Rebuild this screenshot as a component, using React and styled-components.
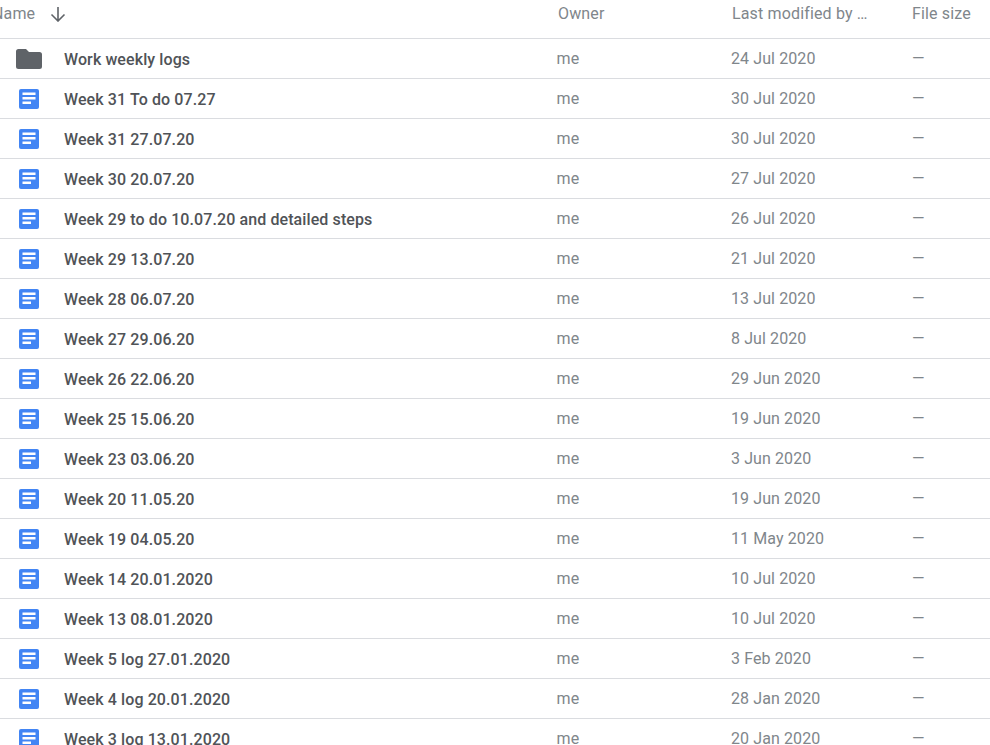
import React from 'react'
import styled, { createGlobalStyle } from 'styled-components'

const GlobalStyle = createGlobalStyle`
    html, body {
        margin: 0;
        padding: 0;
        height: 100%;
        background: #ffffff;
        overflow: hidden;
    }
`

const columns = '556.5px 174.5px 181px 78px'

const Page = styled.main`
    width: 990px;
    height: 745px;
    overflow: hidden;
    font-family: Roboto, 'Liberation Sans', sans-serif;
`

const Header = styled.div`
    display: grid;
    grid-template-columns: ${columns};
    height: 39px;
    box-sizing: border-box;
    align-items: center;
    padding-bottom: 11px;
    border-bottom: 1px solid #dadce0;
`

const HeaderCell = styled.div`
    font-size: 16px;
    font-weight: 400;
    letter-spacing: 0.15px;
    color: #80868b;
    white-space: nowrap;
    padding-left: ${(props) => props.$indent || 0}px;
`

const NameHeader = styled.div`
    display: flex;
    align-items: center;
    gap: 15px;
    margin-left: -8px;
`

const Row = styled.div`
    display: grid;
    grid-template-columns: ${columns};
    height: 40px;
    box-sizing: border-box;
    align-items: center;
    padding-top: 1px;
    border-bottom: 1px solid #dadce0;
`

const NameCell = styled.div`
    display: flex;
    align-items: center;
`

const IconSlot = styled.div`
    width: 64px;
    display: flex;
    justify-content: center;
    box-sizing: border-box;
    padding-right: 6px;
`

const FileName = styled.span`
    font-size: 16px;
    font-weight: 500;
    letter-spacing: 0.1px;
    color: #505357;
    white-space: nowrap;
`

const Meta = styled.div`
    font-size: 16px;
    letter-spacing: 0.1px;
    color: #80868b;
    white-space: nowrap;
    padding-bottom: 2px;
`

const FolderIcon = () => (
    <svg width="26" height="20" viewBox="0 0 26 20">
        <path
            d="M2.500 0H10l3 3h10.500A2.500 2.500 0 0 1 26 5.500V17.500A2.500 2.500 0 0 1 23.500 20H2.500A2.500 2.500 0 0 1 0 17.500V2.500A2.500 2.500 0 0 1 2.500 0Z"
            fill="#5f6368"
        />
    </svg>
)

const DocIcon = () => (
    <svg width="20" height="20" viewBox="0 0 20 20">
        <rect width="20" height="20" rx="2" fill="#4285f4" />
        <rect x="3.500" y="3.500" width="13" height="2.500" fill="#ffffff" />
        <rect x="3.500" y="8" width="13" height="2.500" fill="#ffffff" />
        <rect x="3.500" y="12.500" width="8.500" height="2.500" fill="#ffffff" />
    </svg>
)

const SortArrow = () => (
    <svg width="16" height="16" viewBox="0 0 16 16">
        <path
            d="M8 1v14M1.500 8.500 8 15l6.500-6.500"
            fill="none"
            stroke="#5f6368"
            strokeWidth="1.600"
        />
    </svg>
)

const files = [
    ['Work weekly logs', '24 Jul 2020', true],
    ['Week 31 To do 07.27', '30 Jul 2020'],
    ['Week 31 27.07.20', '30 Jul 2020'],
    ['Week 30 20.07.20', '27 Jul 2020'],
    ['Week 29 to do 10.07.20 and detailed steps', '26 Jul 2020'],
    ['Week 29 13.07.20', '21 Jul 2020'],
    ['Week 28 06.07.20', '13 Jul 2020'],
    ['Week 27 29.06.20', '8 Jul 2020'],
    ['Week 26 22.06.20', '29 Jun 2020'],
    ['Week 25 15.06.20', '19 Jun 2020'],
    ['Week 23 03.06.20', '3 Jun 2020'],
    ['Week 20 11.05.20', '19 Jun 2020'],
    ['Week 19 04.05.20', '11 May 2020'],
    ['Week 14 20.01.2020', '10 Jul 2020'],
    ['Week 13 08.01.2020', '10 Jul 2020'],
    ['Week 5 log 27.01.2020', '3 Feb 2020'],
    ['Week 4 log 20.01.2020', '28 Jan 2020'],
    ['Week 3 log 13.01.2020', '20 Jan 2020'],
]

export default function App() {
    return (
        <Page>
            <GlobalStyle />
            <Header>
                <NameHeader>
                    <HeaderCell>Name</HeaderCell>
                    <SortArrow />
                </NameHeader>
                <HeaderCell $indent={1.5}>Owner</HeaderCell>
                <HeaderCell $indent={1}>Last modified by …</HeaderCell>
                <HeaderCell>File size</HeaderCell>
            </Header>
            {files.map(([name, modified, isFolder]) => (
                <Row key={name}>
                    <NameCell>
                        <IconSlot>{isFolder ? <FolderIcon /> : <DocIcon />}</IconSlot>
                        <FileName>{name}</FileName>
                    </NameCell>
                    <Meta>me</Meta>
                    <Meta>{modified}</Meta>
                    <Meta>—</Meta>
                </Row>
            ))}
        </Page>
    )
}
